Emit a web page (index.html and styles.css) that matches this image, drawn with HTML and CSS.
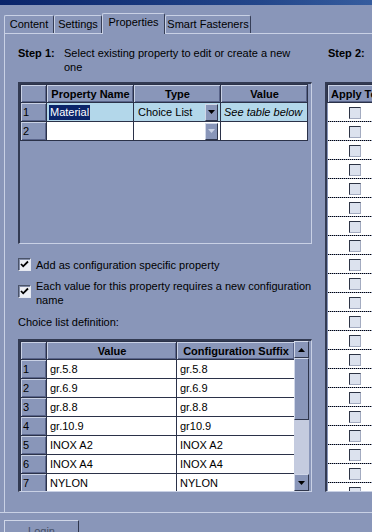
FILE: index.html
```html
<!DOCTYPE html>
<html>
  <head>
    <meta charset="UTF-8">
    <title>Design Properties</title>
    <link rel="stylesheet" href="styles.css">
  </head>
  <body>
    <div id="window">
      <div id="titlebar">Design Properties</div>

      <div id="tabs">
        <div class="tab tab-content">Content</div>
        <div class="tab tab-settings">Settings</div>
        <div class="tab tab-active">Properties</div>
        <div class="tab tab-smart">Smart Fasteners</div>
      </div>

      <div id="panel">
        <div id="step1">
          <div class="step"><b>Step 1:</b><span>Select existing property to edit or create a new one</span></div>

          <div class="frame frame-props">
            <table class="grid">
              <colgroup><col class="c-num"><col class="c-prop"><col class="c-prop"><col class="c-prop"></colgroup>
              <tr class="head"><th></th><th>Property Name</th><th>Type</th><th>Value</th></tr>
              <tr class="row-sel">
                <th class="num">1</th>
                <td><span class="sel">Material</span></td>
                <td><div class="combo"><span>Choice List</span><span class="drop"><svg width="7" height="4"><path d="M0 0h7L3.5 4z"/></svg></span></div></td>
                <td><i>See table below</i></td>
              </tr>
              <tr>
                <th class="num">2</th>
                <td></td>
                <td><div class="combo"><span></span><span class="drop drop-off"><svg width="7" height="4"><path d="M0 0h7L3.5 4z"/></svg></span></div></td>
                <td></td>
              </tr>
            </table>
          </div>

          <div class="check check-one">
            <span class="box"><svg width="11" height="11"><path d="M2 5l2.2 2.3L9 2.5" /></svg></span>
            <span>Add as configuration specific property</span>
          </div>
          <div class="check check-two">
            <span class="box"><svg width="11" height="11"><path d="M2 5l2.2 2.3L9 2.5" /></svg></span>
            <span class="text">Each value for this property requires a new configuration name</span>
          </div>

          <div class="caption">Choice list definition:</div>

          <div class="frame frame-choices">
            <div class="choices">
              <table class="grid">
                <colgroup><col class="c-num"><col class="c-val"><col class="c-suffix"></colgroup>
                <tr class="head"><th></th><th>Value</th><th>Configuration Suffix</th></tr>
                <tr><th class="num">1</th><td>gr.5.8</td><td>gr.5.8</td></tr>
                <tr><th class="num">2</th><td>gr.6.9</td><td>gr.6.9</td></tr>
                <tr><th class="num">3</th><td>gr.8.8</td><td>gr.8.8</td></tr>
                <tr><th class="num">4</th><td>gr.10.9</td><td>gr10.9</td></tr>
                <tr><th class="num">5</th><td>INOX A2</td><td>INOX A2</td></tr>
                <tr><th class="num">6</th><td>INOX A4</td><td>INOX A4</td></tr>
                <tr><th class="num">7</th><td>NYLON</td><td>NYLON</td></tr>
              </table>
              <div class="vscroll">
                <div class="sb-btn"><svg width="7" height="4"><path d="M0 4h7L3.5 0z"/></svg></div>
                <div class="sb-thumb"></div>
                <div class="sb-track"></div>
                <div class="sb-btn"><svg width="7" height="4"><path d="M0 0h7L3.5 4z"/></svg></div>
              </div>
            </div>
          </div>
        </div>

        <div id="step2">
          <div class="step"><b>Step 2:</b><span>Apply to configurations</span></div>
          <div class="frame frame-apply">
            <table class="grid apply">
              <tr class="head"><th>Apply To</th></tr>
              <tr><td><span class="cb"></span></td></tr>
              <tr><td><span class="cb"></span></td></tr>
              <tr><td><span class="cb"></span></td></tr>
              <tr><td><span class="cb"></span></td></tr>
              <tr><td><span class="cb"></span></td></tr>
              <tr><td><span class="cb"></span></td></tr>
              <tr><td><span class="cb"></span></td></tr>
              <tr><td><span class="cb"></span></td></tr>
              <tr><td><span class="cb"></span></td></tr>
              <tr><td><span class="cb"></span></td></tr>
              <tr><td><span class="cb"></span></td></tr>
              <tr><td><span class="cb"></span></td></tr>
              <tr><td><span class="cb"></span></td></tr>
              <tr><td><span class="cb"></span></td></tr>
              <tr><td><span class="cb"></span></td></tr>
              <tr><td><span class="cb"></span></td></tr>
              <tr><td><span class="cb"></span></td></tr>
              <tr><td><span class="cb"></span></td></tr>
              <tr><td><span class="cb"></span></td></tr>
              <tr><td><span class="cb"></span></td></tr>
              <tr><td><span class="cb"></span></td></tr>
            </table>
          </div>
        </div>
      </div>

      <div id="footer">
        <button class="login" disabled>Login</button>
      </div>
    </div>
  </body>
</html>
```

FILE: styles.css
```css
html,
body {
  margin: 0;
  padding: 0;
  height: 100%;
  overflow: hidden;
  background: #8996b9;
  color: #000;
  font-family: "Liberation Sans", Arial, sans-serif;
  font-size: 11px;
}

#window {
  width: 470px;
}

#titlebar {
  height: 18px;
  margin-top: -13px;
  padding-left: 4px;
  overflow: hidden;
  background: linear-gradient(to right, #0a246a 0%, #23468a 55%, #4670b0 100%);
  color: #fff;
  font-weight: bold;
  line-height: 13px;
}

/* Tabs */
#tabs {
  display: flex;
  align-items: flex-end;
  height: 20px;
  margin-top: 8px;
  padding-left: 4px;
}

.tab {
  box-sizing: border-box;
  height: 18px;
  line-height: 17px;
  text-align: center;
  border-top: 1px solid #c9d1e5;
  border-left: 1px solid #c9d1e5;
  border-right: 1px solid #363e57;
  border-radius: 2px 2px 0 0;
}

.tab-content { width: 50px; }
.tab-settings { width: 48px; }
.tab-smart { width: 86px; }

.tab-active {
  position: relative;
  z-index: 1;
  width: 63px;
  height: 21px;
  margin-bottom: -1px;
  background: #8996b9;
}

/* Panel */
#panel {
  display: flex;
  gap: 13px;
  height: 466px;
  margin-left: 4px;
  padding: 12px 0 0 13px;
  border-top: 1px solid #c9d1e5;
  border-left: 1px solid #c9d1e5;
}

#step1 {
  flex: none;
  width: 294px;
}

#step2 {
  flex: none;
  width: 130px;
}

.step {
  display: flex;
  height: 28px;
  line-height: 14px;
}

.step b {
  flex: none;
  width: 46px;
}

.step span {
  width: 240px;
}

#step2 .step {
  margin-left: 3px;
  white-space: nowrap;
}

.frame {
  box-sizing: border-box;
  margin-top: 8px;
  overflow: hidden;
  border-style: solid;
  border-width: 2px 1px 1px 2px;
  border-color: #323a52 #c9d1e5 #c9d1e5 #323a52;
}

.frame-props { height: 162px; }
.frame-choices { height: 153px; margin-top: 10px; }
.frame-apply { height: 410px; }

/* Grids */
.grid {
  border-collapse: collapse;
  table-layout: fixed;
}

.grid th,
.grid td {
  height: 18px;
  padding: 0 2px 0 3px;
  border: 1px solid #2b3249;
  white-space: nowrap;
  overflow: hidden;
  vertical-align: middle;
}

.grid td {
  background: #fff;
}

.grid th {
  background: #8996b9;
  box-shadow: inset 1px 1px 0 #c9d1e5, inset -1px -1px 0 #59648a;
}

.grid .head th {
  height: 17px;
  text-align: center;
}

.grid th.num {
  font-weight: normal;
  text-align: left;
  padding-left: 2px;
}

.c-num { width: 26px; }
.c-prop { width: 87px; }
.c-val { width: 130px; }
.c-suffix { width: 118px; }

.row-sel td {
  background: #b3d7ea;
}

.sel {
  padding: 1px 1px 2px;
  margin-left: -1px;
  background: #0a246a;
  color: #fff;
}

.combo {
  display: flex;
  align-items: center;
  justify-content: space-between;
  padding-left: 1px;
}

.drop {
  display: flex;
  align-items: center;
  justify-content: center;
  box-sizing: border-box;
  width: 13px;
  height: 17px;
  background: #8996b9;
  border: 1px solid;
  border-color: #d0d7e8 #2f364c #2f364c #d0d7e8;
}

.drop-off svg {
  fill: #c9d1e5;
}

/* Check boxes */
.check {
  display: flex;
  gap: 5px;
  line-height: 14px;
}

.check .box {
  flex: none;
  display: block;
  box-sizing: border-box;
  width: 13px;
  height: 13px;
  background: #eceef4;
  border: 1px solid;
  border-color: #4a5369 #e6e9f1 #e6e9f1 #4a5369;
  box-shadow: inset 1px 1px 0 #818ba6;
}

.check .box svg {
  display: block;
  fill: none;
  stroke: #000;
  stroke-width: 1.8;
}

.check-one { margin-top: 14px; }
.check-two { margin-top: 7px; }
.check-two .box { margin-top: 6px; }

.check-two .text {
  flex: none;
  width: 300px;
}

.caption {
  margin-top: 8px;
  line-height: 14px;
}

/* Choice list with scroll bar */
.choices {
  display: flex;
  height: 150px;
}

.vscroll {
  flex: none;
  display: flex;
  flex-direction: column;
  width: 15px;
  margin-left: -1px;
  background: #c4cbdf;
}

.sb-btn,
.sb-thumb {
  box-sizing: border-box;
  background: #8996b9;
  border: 1px solid;
  border-color: #d0d7e8 #2f364c #2f364c #d0d7e8;
}

.sb-btn {
  display: flex;
  align-items: center;
  justify-content: center;
  height: 17px;
}

.sb-thumb { height: 62px; }
.sb-track { flex: 1; }

/* Apply to */
.apply td {
  width: 48px;
  text-align: center;
  border: none;
  border-bottom: 1px dotted #000;
}

.apply .head th {
  text-align: left;
  padding-left: 3px;
}

.cb {
  display: inline-block;
  box-sizing: border-box;
  width: 12px;
  height: 12px;
  vertical-align: middle;
  background: #dce2ee;
  border: 1px solid;
  border-color: #2c3344 #a3abc0 #a3abc0 #2c3344;
}

/* Footer */
#footer {
  padding: 7px 0 0 4px;
  border-top: 1px solid #c9d1e5;
}

.login {
  width: 75px;
  height: 22px;
  padding: 0;
  font: inherit;
  color: #454f66;
  background: #8996b9;
  border: 1px solid;
  border-color: #d0d7e8 #2f364c #2f364c #d0d7e8;
}
```
